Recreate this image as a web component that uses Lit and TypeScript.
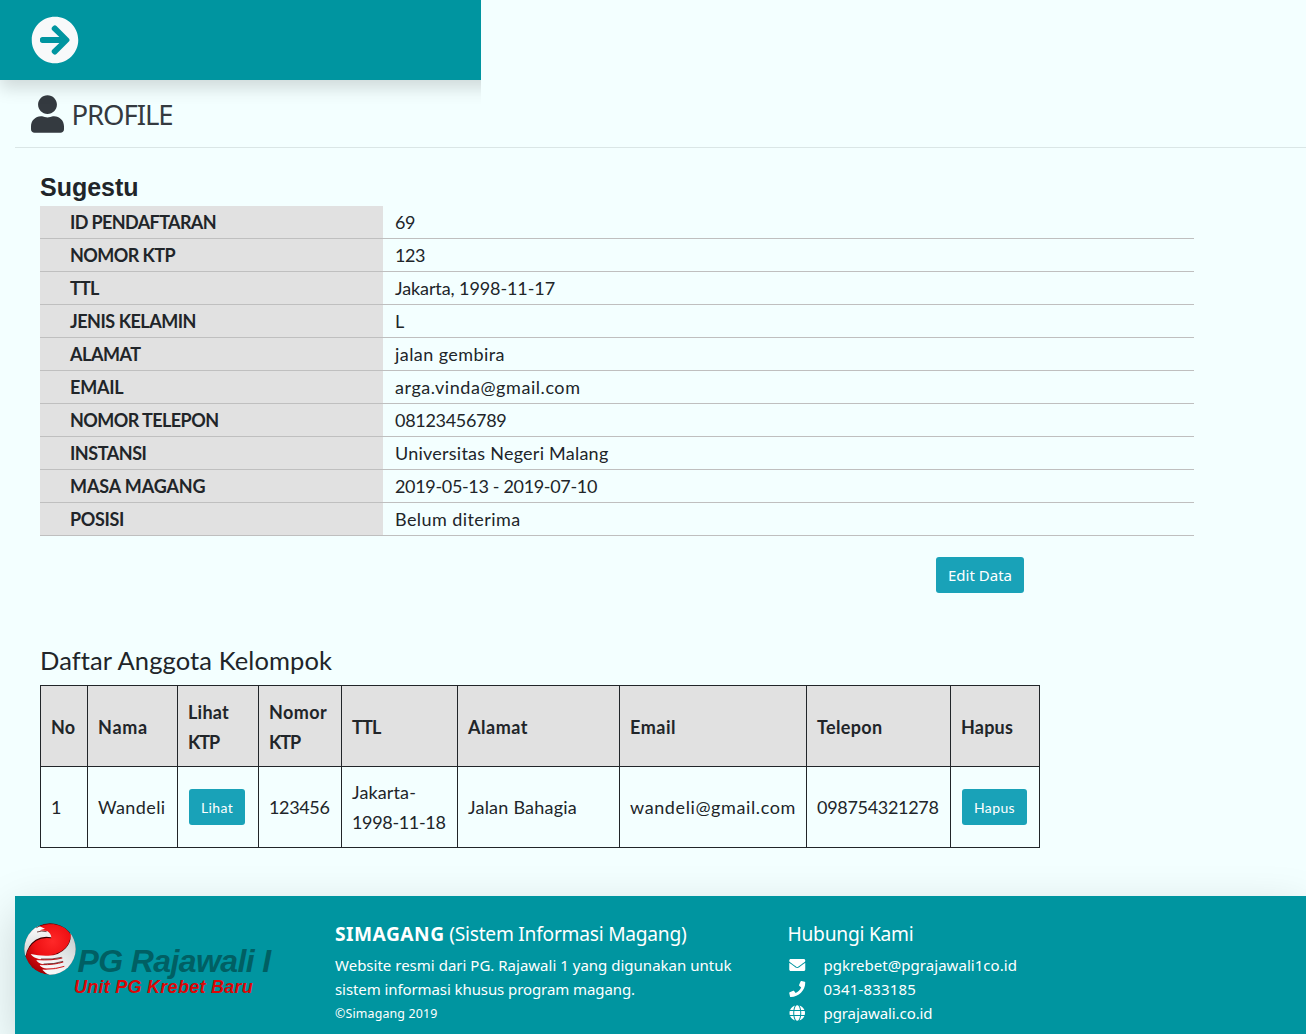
import { LitElement, html, css, svg } from "lit";
import { customElement, property } from "lit/decorators.js";

/** A single line of text whose tracking is adjusted so that it fills a given width. */
@customElement("fit-text")
class FitText extends LitElement {
  @property() text = "";
  @property({ type: Number }) width = 0;

  static styles = css`
    :host { display: inline-block; white-space: pre; }
    .run { display: inline-block; white-space: pre; }
  `;

  render() {
    return html`<span class="run">${this.text}</span>`;
  }

  updated() {
    const run = this.renderRoot.querySelector(".run") as HTMLElement;
    run.style.letterSpacing = "0px";
    const natural = run.getBoundingClientRect().width;
    const gaps = Math.max(this.text.length, 1);
    run.style.letterSpacing = `${((this.width - natural) / gaps).toFixed(3)}px`;
  }
}

const fit = (text: string, width: number) =>
  html`<fit-text .text=${text} .width=${width}></fit-text>`;

const ICONS = {
  arrow: { w: 512, d: "M256 8c137 0 248 111 248 248S393 504 256 504 8 393 8 256 119 8 256 8zm-28.9 143.6l75.5 72.4H120c-13.3 0-24 10.7-24 24v16c0 13.3 10.7 24 24 24h182.6l-75.5 72.4c-9.7 9.3-9.9 24.8-.4 34.3l11 10.9c9.4 9.4 24.6 9.4 33.9 0L404.3 273c9.4-9.4 9.4-24.6 0-33.9L271.6 106.3c-9.4-9.4-24.6-9.4-33.9 0l-11 10.9c-9.5 9.6-9.3 25.1.4 34.4z" },
  user: { w: 448, d: "M224 256c70.7 0 128-57.3 128-128S294.7 0 224 0 96 57.3 96 128s57.3 128 128 128zm89.6 32h-16.7c-22.2 10.2-46.9 16-72.9 16s-50.6-5.8-72.9-16h-16.7C60.2 288 0 348.2 0 422.4V464c0 26.5 21.5 48 48 48h352c26.5 0 48-21.5 48-48v-41.6c0-74.2-60.2-134.4-134.4-134.4z" },
  envelope: { w: 512, d: "M502.3 190.8c3.9-3.1 9.7-.2 9.7 4.7V400c0 26.5-21.5 48-48 48H48c-26.5 0-48-21.5-48-48V195.6c0-5 5.7-7.8 9.7-4.7 22.4 17.4 52.1 39.5 154.1 113.6 21.1 15.4 56.7 47.8 92.2 47.6 35.7.3 72-32.8 92.3-47.6 102-74.1 131.6-96.3 154-113.7zM256 320c23.2.4 56.6-29.2 73.4-41.4 132.7-96.3 142.8-104.7 173.4-128.7 5.8-4.5 9.2-11.5 9.2-18.9v-19c0-26.5-21.5-48-48-48H48c-26.5 0-48 21.5-48 48v19c0 7.4 3.4 14.3 9.2 18.9 30.6 23.9 40.7 32.4 173.4 128.7 16.8 12.2 50.2 41.8 73.4 41.4z" },
  phone: { w: 512, d: "M493.4 24.6l-104-24c-11.3-2.6-22.9 3.3-27.5 13.9l-48 112c-4.2 9.8-1.4 21.3 6.9 28l60.6 49.6c-36 76.7-98.9 140.5-177.2 177.2l-49.6-60.6c-6.8-8.3-18.2-11.1-28-6.9l-112 48C3.9 366.5-2 378.1.6 389.4l24 104C27.1 504.2 36.7 512 48 512c256.1 0 464-207.5 464-464 0-11.2-7.7-20.9-18.6-23.4z" },
  globe: { w: 496, d: "M336.5 160C322 70.7 287.8 8 248 8s-74 62.7-88.5 152h177zM152 256c0 22.2 1.2 43.5 3.3 64h185.3c2.1-20.5 3.3-41.8 3.3-64s-1.2-43.5-3.3-64H155.3c-2.1 20.5-3.3 41.8-3.3 64zm324.7-96c-28.6-67.9-86.5-120.4-158-141.6 24.4 33.8 41.2 84.7 50 141.6h108zM177.2 18.4C105.8 39.6 47.8 92.1 19.3 160h108c8.7-56.9 25.5-107.8 49.9-141.6zM487.4 192H372.7c2.1 21 3.3 42.5 3.3 64s-1.2 43-3.3 64h114.6c5.5-20.5 8.6-41.8 8.6-64s-3.1-43.5-8.5-64zM120 256c0-21.5 1.2-43 3.3-64H8.6C3.2 212.5 0 233.8 0 256s3.2 43.5 8.6 64h114.6c-2-21-3.2-42.5-3.2-64zm39.5 96c14.5 89.3 48.7 152 88.5 152s74-62.7 88.5-152h-177zm159.3 141.6c71.4-21.2 129.4-73.7 158-141.6h-108c-8.8 56.9-25.6 107.8-50 141.6zM19.3 352c28.6 67.9 86.5 120.4 158 141.6-24.4-33.8-41.2-84.7-50-141.6h-108z" },
};

const icon = (name: keyof typeof ICONS, cls: string) => html`
  <svg class=${cls} viewBox="0 0 ${ICONS[name].w} 512" aria-hidden="true">
    ${svg`<path fill="currentColor" d=${ICONS[name].d}></path>`}
  </svg>`;

type Line = [string, number];

const PROFILE: [Line, Line][] = [
  [["ID PENDAFTARAN", 146], ["69", 20]],
  [["NOMOR KTP", 105], ["123", 30]],
  [["TTL", 28.5], ["Jakarta, 1998-11-17", 160]],
  [["JENIS KELAMIN", 126], ["L", 9]],
  [["ALAMAT", 70.5], ["jalan gembira", 110]],
  [["EMAIL", 53.5], ["arga.vinda@gmail.com", 185.5]],
  [["NOMOR TELEPON", 148.5], ["08123456789", 111.5]],
  [["INSTANSI", 76.5], ["Universitas Negeri Malang", 213.5]],
  [["MASA MAGANG", 135.5], ["2019-05-13 - 2019-07-10", 202]],
  [["POSISI", 54], ["Belum diterima", 125.5]],
];

const HEADS: Line[][] = [
  [["No", 24.5]],
  [["Nama", 50]],
  [["Lihat", 41], ["KTP", 31]],
  [["Nomor", 58], ["KTP", 31]],
  [["TTL", 28.5]],
  [["Alamat", 60]],
  [["Email", 46]],
  [["Telepon", 65.5]],
  [["Hapus", 52]],
];

const MEMBER: { lines: Line[]; button?: boolean }[] = [
  { lines: [["1", 10]] },
  { lines: [["Wandeli", 67.5]] },
  { lines: [["Lihat", 32]], button: true },
  { lines: [["123456", 60.5]] },
  { lines: [["Jakarta-", 64], ["1998-11-18", 93.5]] },
  { lines: [["Jalan Bahagia", 109]] },
  { lines: [["wandeli@gmail.com", 166]] },
  { lines: [["098754321278", 121.5]] },
  { lines: [["Hapus", 41]], button: true },
];

const CONTACTS: [keyof typeof ICONS, string, number][] = [
  ["envelope", "pgkrebet@pgrajawali1co.id", 193.5],
  ["phone", "0341-833185", 92.5],
  ["globe", "pgrajawali.co.id", 109],
];

@customElement("app-root")
class AppRoot extends LitElement {
  static styles = css`
    :host {
      display: block;
      height: 1034px;
      overflow: hidden;
      background: #f3ffff;
      color: #212529;
      font-family: "Noto Sans", sans-serif;
      font-size: 16px;
    }
    * { box-sizing: border-box; }
    svg { display: block; flex: none; }
    .topclip { width: 481px; height: 80px; clip-path: inset(0 0 -60px 0); }
    .topbar {
      width: 520px; height: 80px; padding-left: 31px;
      display: flex; align-items: center;
      background: #0095a0; color: #f8f9fa;
      box-shadow: 0 8px 16px rgba(0, 0, 0, .15);
    }
    .arrow { width: 48px; height: 48px; }
    .page { margin-left: 15px; }
    .title {
      height: 68px; padding: 15px 0 0 15.5px;
      display: flex; align-items: flex-start; gap: 8px;
      border-bottom: 1px solid #dae6e6;
      color: #343a40; font-size: 27.5px; line-height: 40px;
    }
    .user { width: 33px; height: 38px; }
    .content { padding-left: 25px; }
    .name {
      padding-top: 22px; height: 58px;
      font: bold 25px/34px "Liberation Sans", Arial, sans-serif;
    }
    .calibri { font-family: Lato, "Noto Sans", sans-serif; font-size: 18px; }
    .profile { width: 1154px; }
    .row { display: flex; height: 33px; line-height: 32px; border-bottom: 1px solid #bfbfbf; }
    .label { width: 343px; padding-left: 30px; background: #e1e1e1; font-weight: 700; line-height: 33px; }
    .value { padding-left: 12px; }
    .actions { width: 984px; padding-top: 21px; height: 107px; display: flex; justify-content: flex-end; align-items: flex-start; }
    .btn {
      height: 36px; padding: 0 12px; border: 0; border-radius: 3px;
      background: #19a2b8; color: #fff; display: inline-flex; align-items: center;
      font: 15px/36px "Noto Sans", sans-serif;
    }
    .btn.small { font: 14px/36px Lato, sans-serif; margin-left: 1px; padding-top: 2px; }
    .subtitle { height: 42px; line-height: 34px; font-family: Lato, sans-serif; font-size: 25.5px; }
    .members {
      display: grid; width: 1000px;
      grid-template-columns: 47px 90px 81px 83px 116px 162px 187px 144px 89px;
      grid-auto-rows: 81px;
      border: solid #212529; border-width: 1px 0 0 1px;
    }
    .cell {
      display: flex; flex-direction: column; justify-content: center; align-items: flex-start;
      padding-left: 10px; line-height: 30px;
      border: solid #212529; border-width: 0 1px 1px 0;
    }
    .cell.head { background: #e1e1e1; font-weight: 700; padding-top: 1px; }
    .footer {
      margin-top: 48px; height: 138px; display: flex;
      background: #0095a0; color: #fff;
      box-shadow: 0 16px 48px rgba(0, 0, 0, .175);
    }
    .brand { width: 320px; padding: 27px 0 0 8.5px; display: flex; }
    .ball { width: 52px; height: 52px; }
    .words { padding-top: 20px; font-family: "Liberation Sans", Arial, sans-serif; font-weight: 700; font-style: italic; }
    .w1 { color: #005f63; font-size: 32px; line-height: 36px; height: 36px; padding-left: 2px; }
    .w2 { color: #dd0606; font-size: 18px; line-height: 16px; margin: 0 0 0 -1.5px; }
    .about { width: 452.5px; padding-top: 24px; }
    .h { font-size: 19.2px; line-height: 28px; height: 33px; }
    .p { font-size: 15px; line-height: 24px; height: 24px; }
    .s { font-size: 12.4px; line-height: 24px; margin-top: 1px; }
    .reach { padding-top: 24px; }
    .contact { display: flex; align-items: center; height: 24px; font-size: 15px; line-height: 24px; }
    .ci { width: 16.5px; height: 16px; margin: 0 18px 0 1.5px; }
  `;

  private ball() {
    return html`<svg class="ball" viewBox="11 12 156 156" aria-hidden="true">${svg`
      <defs>
        <radialGradient id="red" cx=".55" cy=".35" r=".65">
          <stop offset="0" stop-color="#ff2828"></stop>
          <stop offset=".55" stop-color="#ee1013"></stop>
          <stop offset="1" stop-color="#a00004"></stop>
        </radialGradient>
        <linearGradient id="silver" x1="0" y1="0" x2="0" y2="1">
          <stop offset="0" stop-color="#fff"></stop>
          <stop offset="1" stop-color="#cfd3d3"></stop>
        </linearGradient>
        <linearGradient id="pale" x1="1" y1="0" x2="0" y2="1">
          <stop offset="0" stop-color="#bcc6c8"></stop>
          <stop offset=".6" stop-color="#f2f4f4"></stop>
          <stop offset="1" stop-color="#fff"></stop>
        </linearGradient>
        <clipPath id="disc"><circle cx="89" cy="90" r="77"></circle></clipPath>
      </defs>
      <g clip-path="url(#disc)">
        <circle cx="89" cy="90" r="77" fill="url(#red)"></circle>
        <path fill="#3a0002" d="M8 112 L16 114 Q22 82 48 65 Q66 54 93 58 L90 52 Q50 50 30 74Z"></path>
        <path fill="url(#silver)" d="M6 112 L4 60 L44 16 Q58 22 74 29 L58 34 L80 36 Q92 43 93 55 Q66 50 46 62 Q22 78 16 110Z"></path>
        <path fill="none" stroke="#3a0002" stroke-width="2" d="M50 39 Q64 34 79 38"></path>
        <path fill="#3a0002" d="M147 34 Q156 62 138 84 Q120 104 92 108 L128 104 L154 76Z"></path>
        <path fill="url(#pale)" d="M150 38 Q156 66 137 87 Q116 110 84 110 Q56 111 31 105 Q38 116 58 121 L122 119 L48 123 Q52 133 70 136 L128 130 L58 138 Q64 148 80 149 L130 143 L66 152 Q76 164 100 174 L170 150 L178 60Z"></path>
        <path fill="none" stroke="#d0181c" stroke-width="3" d="M50 122 Q96 125 126 117 M62 137 Q102 138 129 129 M72 151 Q108 151 132 142"></path>
        <path fill="none" stroke="#3a0002" stroke-width="2" d="M62 120 Q98 122 124 115 M70 135 Q102 136 128 127"></path>
        <path fill="none" stroke="#3a0002" stroke-width="2.500" d="M48 26 Q70 12 100 14 Q136 20 149 42"></path>
      </g>`}</svg>`;
  }

  render() {
    return html`
      <div class="topclip"><div class="topbar">${icon("arrow", "arrow")}</div></div>
      <div class="page">
        <div class="title">${icon("user", "user")}${fit("PROFILE", 101)}</div>
        <div class="content">
          <div class="name">${fit("Sugestu", 98.5)}</div>
          <div class="profile calibri">
            ${PROFILE.map(([l, v]) => html`
              <div class="row">
                <div class="label">${fit(...l)}</div>
                <div class="value">${fit(...v)}</div>
              </div>`)}
          </div>
          <div class="actions"><button class="btn">${fit("Edit Data", 64)}</button></div>
          <div class="subtitle">${fit("Daftar Anggota Kelompok", 291.5)}</div>
          <div class="members calibri">
            ${HEADS.map((lines) => html`<div class="cell head">${lines.map((l) => fit(...l))}</div>`)}
            ${MEMBER.map((c) => html`<div class="cell">${c.button
              ? html`<button class="btn small">${fit(...c.lines[0])}</button>`
              : c.lines.map((l) => fit(...l))}</div>`)}
          </div>
        </div>
        <div class="footer">
          <div class="brand">
            ${this.ball()}
            <div class="words">
              <div class="w1">${fit("PG Rajawali I", 193)}</div>
              <div class="w2">${fit("Unit PG Krebet Baru", 179)}</div>
            </div>
          </div>
          <div class="about">
            <div class="h"><b>${fit("SIMAGANG", 109.5)}</b>${fit(" (Sistem Informasi Magang)", 242)}</div>
            <div class="p">${fit("Website resmi dari PG. Rajawali 1 yang digunakan untuk", 396.5)}</div>
            <div class="p">${fit("sistem informasi khusus program magang.", 300)}</div>
            <div class="s">${fit("©Simagang 2019", 102.5)}</div>
          </div>
          <div class="reach">
            <div class="h">${fit("Hubungi Kami", 126)}</div>
            ${CONTACTS.map(([i, t, w]) => html`<div class="contact">${icon(i, "ci")}${fit(t, w)}</div>`)}
          </div>
        </div>
      </div>`;
  }
}
